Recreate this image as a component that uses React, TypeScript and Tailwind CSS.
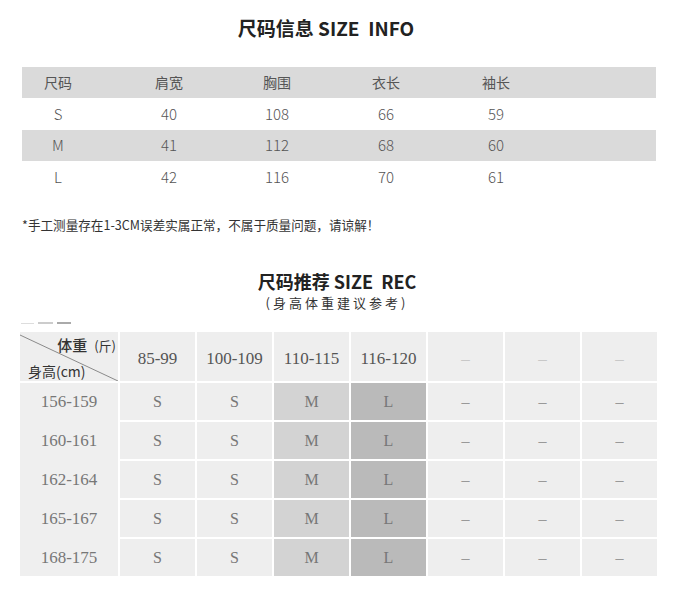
import React from "react";

const sans = { fontFamily: '"Noto Sans CJK SC", "Noto Sans", sans-serif' };
const serif = { fontFamily: '"Liberation Serif", "Noto Sans CJK SC", serif' };

const t1Rows = [
  ["S", "40", "108", "66", "59"],
  ["M", "41", "112", "68", "60"],
  ["L", "42", "116", "70", "61"],
];
const t1Heights = ["h-[32px]", "h-[31px]", "h-[33px]"];

const heights = ["156-159", "160-161", "162-164", "165-167", "168-175"];
const weights = ["85-99", "100-109", "110-115", "116-120", "–", "–", "–"];
const sizes = ["S", "S", "M", "L", "–", "–", "–"];

function Row1({
  cells,
  shaded,
  header,
  h,
}: {
  cells: string[];
  shaded: boolean;
  header?: boolean;
  h: string;
}) {
  return (
    <div
      className={`grid grid-cols-[72px_21px_108px_108px_110px_110px_1fr] ${h} items-center ${
        shaded ? "bg-[#dadada]" : ""
      } ${header ? "text-[14px] text-[#555]" : "text-[15px] text-[#555] font-light"}`}
    >
      <div className="text-center">{cells[0]}</div>
      <div />
      <div className="text-center">{cells[1]}</div>
      <div className="text-center">{cells[2]}</div>
      <div className="text-center">{cells[3]}</div>
      <div className="text-center">{cells[4]}</div>
      <div />
    </div>
  );
}

function cellBg(i: number) {
  if (i === 2) return "bg-[#d3d3d3]";
  if (i === 3) return "bg-[#bababa]";
  return "bg-[#eeeeee]";
}

export default function App() {
  return (
    <div className="w-[674px] h-[590px] bg-white overflow-hidden" style={sans}>
      <h1 className="pt-[15px] pr-[22px] text-center text-[19px] font-bold leading-[26px] text-[#222]">
        尺码信息 SIZE&nbsp;&nbsp;INFO
      </h1>

      <div className="mt-[26px] ml-[22px] w-[634px]">
        <Row1 cells={["尺码", "肩宽", "胸围", "衣长", "袖长"]} shaded header h="h-[31px]" />
        {t1Rows.map((r, i) => (
          <Row1 key={i} cells={r} shaded={i === 1} h={t1Heights[i]} />
        ))}
      </div>

      <p className="mt-[22px] ml-[22px] text-[12.6px] leading-[18px] text-[#333]">
        *手工测量存在1-3CM误差实属正常，不属于质量问题，请谅解！
      </p>

      <h2 className="mt-[35px] text-center text-[18px] font-bold leading-[24px] text-[#222]">
        尺码推荐 SIZE&nbsp;&nbsp;REC
      </h2>
      <p className="text-center text-[13px] leading-[20px] tracking-[3px] text-[#333]">
        (身高体重建议参考)
      </p>

      <div className="mt-[9px] ml-[21px] flex items-center gap-[4px] h-[2px]">
        <div className="w-[13px] h-[1px] bg-[#dddddd]" />
        <div className="w-[15px] h-[2px] bg-[#cccccc]" />
        <div className="w-[14px] h-[2px] bg-[#aaaaaa]" />
      </div>

      <div className="mt-[8px] ml-[20px] w-[637px] flex gap-[2px]">
        {/* first column */}
        <div className="w-[98px] flex flex-col gap-[2px]">
          <div className="relative h-[49px] bg-[#eeeeee]">
            <svg className="absolute inset-0" width="98" height="49" viewBox="0 0 98 49">
              <line x1="0" y1="3" x2="98" y2="49" stroke="#8a8a8a" strokeWidth="1" />
            </svg>
            <div className="absolute right-[2px] top-[3px] flex items-baseline text-[#333]">
              <span className="text-[15px] leading-[20px] font-medium">体重</span>
              <span className="ml-[7px] text-[13px] leading-[20px]">(斤)</span>
            </div>
            <div className="absolute left-[8px] bottom-[0px] text-[14px] leading-[20px] text-[#333]">
              身高(cm)
            </div>
          </div>
          <div className="bg-[#efefef] flex flex-col">
            {heights.map((h, i) => (
              <div
                key={h}
                className={`h-[37px] flex items-center justify-center text-[17px] text-[#777] ${
                  i < 4 ? "mb-[2px]" : ""
                }`}
                style={serif}
              >
                {h}
              </div>
            ))}
          </div>
        </div>

        {/* data grid */}
        <div className="flex-1 grid grid-cols-7 gap-[2px]">
          {weights.map((w, i) => (
            <div
              key={"h" + i}
              className={`h-[49px] pt-[4px] bg-[#eeeeee] flex items-center justify-center text-[17px] ${
                w === "–" ? "text-[#c8c8c8]" : "text-[#555]"
              }`}
              style={serif}
            >
              {w}
            </div>
          ))}
          {heights.map((h) =>
            sizes.map((s, i) => (
              <div
                key={h + i}
                className={`h-[37px] ${cellBg(i)} flex items-center justify-center text-[16px] ${
                  s === "–" ? "text-[#999]" : "text-[#777]"
                }`}
                style={serif}
              >
                {s}
              </div>
            ))
          )}
        </div>
      </div>
    </div>
  );
}
